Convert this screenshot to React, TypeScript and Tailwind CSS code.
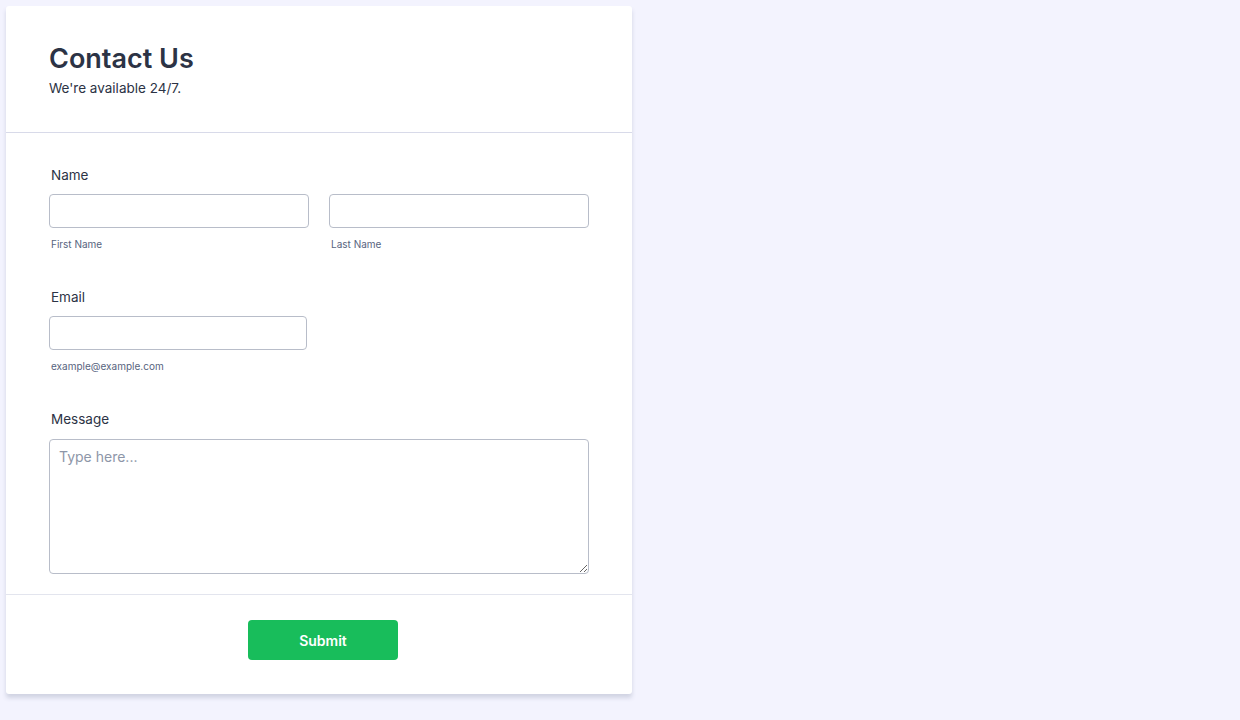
export default function App() {
  return (
    <div
      className="min-h-[720px] w-full bg-[#f3f3fe] pt-[6px] pl-[6px]"
      style={{ fontFamily: "Inter, 'Noto Sans', sans-serif" }}
    >
      <div className="w-[626px] bg-white rounded-[3px] shadow-[0_4px_4px_rgba(87,100,126,0.21)]">
        <div className="h-[127px] px-[43px] pt-[36px] border-b border-[#d8dae9]">
          <h1 className="text-[27px] leading-[34px] font-semibold text-[#2c3345]">Contact Us</h1>
          <p className="mt-[3px] text-[13.5px] leading-[18px] text-[#2c3345]">We're available 24/7.</p>
        </div>

        <div className="px-[43px] pt-[32px] pb-[20px] border-b border-[#e3e5ee]">
          <label className="block pl-[2px] text-[13.5px] leading-[20px] text-[#2c3345]">Name</label>
          <div className="mt-[9px] flex gap-[20px]">
            <div className="w-[260px]">
              <input className="block w-full h-[34px] rounded-[4px] border border-[#b8bdc9] bg-white px-3 text-[14px] outline-none" />
              <div className="mt-[8px] pl-[2px] text-[10px] leading-[16px] text-[#57647e]">First Name</div>
            </div>
            <div className="w-[260px]">
              <input className="block w-full h-[34px] rounded-[4px] border border-[#b8bdc9] bg-white px-3 text-[14px] outline-none" />
              <div className="mt-[8px] pl-[2px] text-[10px] leading-[16px] text-[#57647e]">Last Name</div>
            </div>
          </div>

          <label className="mt-[35px] block pl-[2px] text-[13.5px] leading-[20px] text-[#2c3345]">Email</label>
          <div className="mt-[9px] w-[258px]">
            <input className="block w-full h-[34px] rounded-[4px] border border-[#b8bdc9] bg-white px-3 text-[14px] outline-none" />
            <div className="mt-[8px] pl-[2px] text-[10px] leading-[16px] text-[#57647e]">example@example.com</div>
          </div>

          <label className="mt-[35px] block pl-[2px] text-[13.5px] leading-[20px] text-[#2c3345]">Message</label>
          <textarea
            placeholder="Type here..."
            className="mt-[10px] block w-[540px] h-[135px] rounded-[4px] border border-[#b8bdc9] bg-white px-[9px] py-[8px] text-[14px] leading-[18px] text-[#2c3345] placeholder:text-[#8d96a8] outline-none"
          />
        </div>

        <div className="h-[99px] pt-[25px] flex justify-center">
          <button className="ml-[8px] w-[150px] h-[40px] rounded-[4px] bg-[#18bd5b] text-white text-[14px] font-semibold">
            Submit
          </button>
        </div>
      </div>
    </div>
  );
}
